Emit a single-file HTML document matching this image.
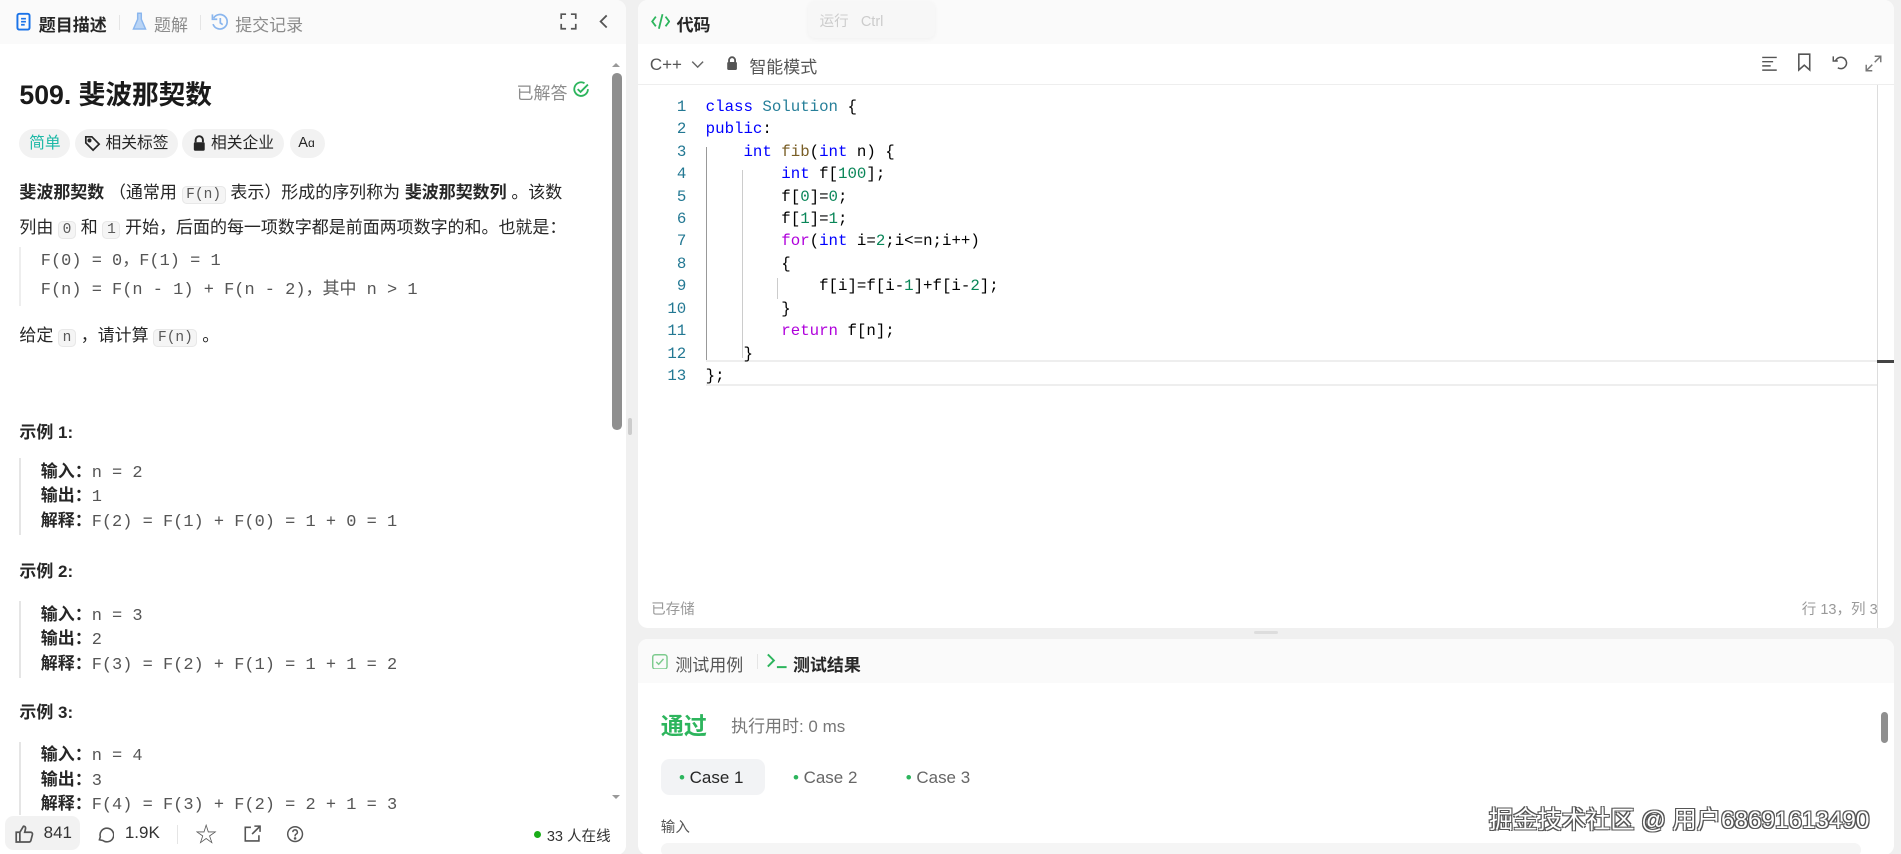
<!DOCTYPE html>
<html><head><meta charset="utf-8"><style>
*{box-sizing:border-box;margin:0;padding:0}
html,body{width:1901px;height:854px;overflow:hidden;background:#f0f0f0}
#z{zoom:1.2125;width:1568px;height:705px;position:relative;font-family:"Liberation Sans","Noto Sans CJK SC",sans-serif;color:#262626;font-size:14px}
.a{position:absolute}
.mono{font-family:"Liberation Mono","DejaVu Sans Mono",monospace}
.lp{left:0;top:0;width:516px;height:705px;background:#fff;border-radius:0 8px 8px 0;overflow:hidden}
.hd{left:0;top:0;width:100%;height:36px;background:#fafafa}
.code{background:#f5f5f5;border:1px solid #e8e8e8;border-radius:4px;font-size:12px;padding:0 3px;color:#595959;font-family:"Liberation Mono",monospace}
.tag{height:24px;border-radius:12px;background:#f2f2f2;font-size:13px;line-height:24px;padding:0 8px;top:106px;white-space:nowrap}
.ex{left:16px;font-weight:bold;font-size:14px}
.blk{left:16px;border-left:2px solid #e5e5e5;padding-left:16px;font-size:14px;line-height:18.5px;color:#555}
.blk b{color:#262626}
.rp{left:526px;top:0;width:1036px;height:518px;background:#fff;border-radius:8px;overflow:hidden}
.ln{left:526px;width:40px;text-align:right;font-size:13px;color:#237893;font-family:"Liberation Mono",monospace}
.cl{left:582px;font-size:13px;font-family:"Liberation Mono",monospace;color:#000;white-space:pre}
.k{color:#0000ff}.t{color:#267f99}.n{color:#098658}.p{color:#af00db}.f{color:#795e26}
.tp{left:526px;top:527px;width:1036px;height:178px;background:#fff;border-radius:8px;overflow:hidden}
</style></head><body><div id="z">
<div class="a lp">
 <div class="a hd"></div>
 <svg class="a" style="left:12px;top:10px" width="14" height="16" viewBox="0 0 14 16"><rect x="2" y="1.5" width="10" height="13" rx="1.5" fill="none" stroke="#1a73e8" stroke-width="1.6"/><path d="M5 5.5h4M5 8h4M5 10.5h3" stroke="#1a73e8" stroke-width="1.4"/></svg>
 <div class="a" style="left:32px;top:9px;font-size:14px;font-weight:bold">题目描述</div>
 <div class="a" style="left:98px;top:12px;width:1px;height:13px;background:#e5e5e5"></div>
 <svg class="a" style="left:108px;top:10px" width="14" height="16" viewBox="0 0 14 16"><path d="M5 1h4M5.5 1v5L2 14h10L8.5 6V1" fill="#b9d4f5" stroke="#8ab6ee" stroke-width="1.2"/></svg>
 <div class="a" style="left:127px;top:9px;color:#8c8c8c">题解</div>
 <div class="a" style="left:165px;top:12px;width:1px;height:13px;background:#e5e5e5"></div>
 <svg class="a" style="left:173px;top:10px" width="16" height="16" viewBox="0 0 16 16"><path d="M3 5A6 6 0 1 1 2.5 10" fill="none" stroke="#8ab6ee" stroke-width="1.4"/><path d="M2 2v4h4" fill="none" stroke="#8ab6ee" stroke-width="1.4"/><path d="M8.5 5v4l2 1.5" fill="none" stroke="#8ab6ee" stroke-width="1.4"/></svg>
 <div class="a" style="left:194px;top:9px;color:#8c8c8c">提交记录</div>
 <svg class="a" style="left:462px;top:11px" width="14" height="14" viewBox="0 0 14 14" fill="none" stroke="#555" stroke-width="1.4"><path d="M1 5V1h4M9 1h4v4M13 9v4H9M5 13H1V9"/></svg>
 <svg class="a" style="left:492px;top:11px" width="12" height="14" viewBox="0 0 12 14" fill="none" stroke="#555" stroke-width="1.5"><path d="M8 2L3 7l5 5"/></svg>
 <div class="a" style="left:16px;top:60px;font-size:22px;font-weight:bold;color:#1a1a1a">509. 斐波那契数</div>
 <div class="a" style="left:426px;top:65px;color:#8c8c8c;font-size:14px">已解答</div>
 <svg class="a" style="left:472px;top:66px" width="15" height="15" viewBox="0 0 16 16" fill="none" stroke="#2db55d" stroke-width="1.6"><path d="M14 8A6 6 0 1 1 11 2.8"/><path d="M5 8l2.5 2.5L14 4"/></svg>
 <div class="a tag" style="left:16px;color:#1cb8a6">简单</div>
 <div class="a tag" style="left:62px;padding-left:25px">相关标签</div>
 <svg class="a" style="left:69px;top:111px" width="14" height="14" viewBox="0 0 14 14" fill="none" stroke="#262626" stroke-width="1.4"><path d="M1.5 1.5h5l6 6-5 5-6-6z"/><circle cx="4.5" cy="4.5" r="1" fill="#262626"/></svg>
 <div class="a tag" style="left:150px;padding-left:24px">相关企业</div>
 <svg class="a" style="left:158px;top:111px" width="12" height="14" viewBox="0 0 12 14"><path d="M3 6V4a3 3 0 0 1 6 0v2" fill="none" stroke="#262626" stroke-width="1.6"/><rect x="1.5" y="6" width="9" height="7" rx="1" fill="#262626"/></svg>
 <div class="a tag" style="left:239px;width:29px;padding:0 7px;font-size:12px">A<span style="font-size:10px">ɑ</span></div>
 <div class="a" style="left:16px;top:146px;width:490px;line-height:26px;font-size:14px;white-space:nowrap"><b>斐波那契数</b> （通常用 <span class="code">F(n)</span> 表示）形成的序列称为 <b>斐波那契数列</b> 。该数<br>列由 <span class="code">0</span> 和 <span class="code">1</span> 开始，后面的每一项数字都是前面两项数字的和。也就是：</div>
 <div class="a mono" style="left:16px;top:204px;border-left:2px solid #eee;padding-left:16px;line-height:24px;color:#555;font-size:14px;white-space:pre">F(0) = 0，F(1) = 1
F(n) = F(n - 1) + F(n - 2)，其中 n &gt; 1</div>
 <div class="a" style="left:16px;top:264px;line-height:26px">给定 <span class="code">n</span> ，请计算 <span class="code">F(n)</span> 。</div>
 <div class="a ex" style="top:345px">示例 1:</div>
 <div class="a blk" style="top:378px;height:63px;padding-top:2px"><b>输入：</b><span class="mono">n = 2</span><br><b>输出：</b><span class="mono">1</span><br><b>解释：</b><span class="mono">F(2) = F(1) + F(0) = 1 + 0 = 1</span></div>
 <div class="a ex" style="top:459px">示例 2:</div>
 <div class="a blk" style="top:496px;height:63px;padding-top:2px"><b>输入：</b><span class="mono">n = 3</span><br><b>输出：</b><span class="mono">2</span><br><b>解释：</b><span class="mono">F(3) = F(2) + F(1) = 1 + 1 = 2</span></div>
 <div class="a ex" style="top:576px">示例 3:</div>
 <div class="a blk" style="top:612px;height:60px;padding-top:2px;overflow:hidden"><b>输入：</b><span class="mono">n = 4</span><br><b>输出：</b><span class="mono">3</span><br><b>解释：</b><span class="mono">F(4) = F(3) + F(2) = 2 + 1 = 3</span></div>
 <div class="a" style="left:505px;top:60px;width:8px;height:295px;background:#8f8f8f;border-radius:4px"></div>
 <div class="a" style="left:505px;top:52px;width:0;height:0;border:4px solid transparent;border-bottom-color:#999;border-top:0"></div>
 <div class="a" style="left:505px;top:656px;width:0;height:0;border:4px solid transparent;border-top-color:#999;border-bottom:0"></div>
 <div class="a" style="left:0;top:672px;width:516px;height:33px;background:#fff"></div>
 <div class="a" style="left:4px;top:673px;width:62px;height:28px;border-radius:7px;background:#f2f2f2"></div>
 <svg class="a" style="left:12px;top:680px" width="16" height="15" viewBox="0 0 16 15" fill="none" stroke="#555" stroke-width="1.4"><path d="M1 6h3v8H1zM4 6l3-5c1.5 0 2 1 1.6 2.5L8 6h5c1 0 1.6.9 1.4 1.8l-1.3 5c-.2.7-.8 1.2-1.5 1.2H4"/></svg>
 <div class="a" style="left:36px;top:679px;font-size:14px;color:#333">841</div>
 <svg class="a" style="left:79px;top:680px" width="15" height="15" viewBox="0 0 16 16" fill="none" stroke="#555" stroke-width="1.4"><path d="M3 13l.8-2.6A6 6 0 1 1 6 13.6z"/></svg>
 <div class="a" style="left:103px;top:679px;color:#333">1.9K</div>
 <div class="a" style="left:146px;top:680px;width:1px;height:16px;background:#e5e5e5"></div>
 <div class="a" style="left:161px;top:675px;font-size:18px;color:#555">☆</div>
 <svg class="a" style="left:200px;top:680px" width="15" height="15" viewBox="0 0 16 16" fill="none" stroke="#555" stroke-width="1.4"><path d="M7 2H2v12h12V9M10 1h5v5M15 1L8 8"/></svg>
 <svg class="a" style="left:236px;top:680px" width="15" height="15" viewBox="0 0 16 16" fill="none" stroke="#555" stroke-width="1.3"><circle cx="8" cy="8" r="6.5"/><path d="M6 6.3a2 2 0 1 1 2.8 1.8c-.5.3-.8.7-.8 1.3v.6"/><circle cx="8" cy="11.8" r=".5" fill="#555"/></svg>
 <div class="a" style="left:440px;top:685px;width:6px;height:6px;border-radius:3px;background:#1aad19"></div>
 <div class="a" style="left:451px;top:680px;font-size:12px;color:#333">33 人在线</div>
</div>
<div class="a" style="left:518px;top:345px;width:3px;height:14px;background:#ccc;border-radius:2px"></div>

<div class="a rp">
 <div class="a" style="left:0;top:0;width:100%;height:36px;background:#fafafa"></div>
 <svg class="a" style="left:11px;top:11px" width="16" height="14" viewBox="0 0 16 14" fill="none" stroke="#2db55d" stroke-width="1.5"><path d="M4 3L1 7l3 4M12 3l3 4-3 4M9.5 1L6.5 13"/></svg>
 <div class="a" style="left:32px;top:9px;font-weight:bold">代码</div>
 <div class="a" style="left:140px;top:1px;width:105px;height:30px;background:#f7f7f7;border-radius:6px;box-shadow:0 1px 4px rgba(0,0,0,.04)"></div>
 <div class="a" style="left:150px;top:8px;font-size:12px;color:#ccc">运行 &nbsp; Ctrl</div>
 <div class="a" style="left:0;top:36px;width:100%;height:34px;border-bottom:1px solid #eee"></div>
 <div class="a" style="left:10px;top:45px;color:#555;font-size:14px">C++</div>
 <svg class="a" style="left:44px;top:48px" width="11" height="10" viewBox="0 0 11 10" fill="none" stroke="#666" stroke-width="1.2"><path d="M1 3l4.5 4.5L10 3"/></svg>
 <svg class="a" style="left:73px;top:46px" width="10" height="12" viewBox="0 0 10 12"><path d="M2.5 5V3.5a2.5 2.5 0 0 1 5 0V5" fill="none" stroke="#555" stroke-width="1.5"/><rect x="1" y="5" width="8" height="6.5" rx="1" fill="#555"/></svg>
 <div class="a" style="left:92px;top:44px;color:#555;font-size:14px">智能模式</div>
 <svg class="a" style="left:926px;top:45px" width="14" height="14" viewBox="0 0 14 14" stroke="#555" stroke-width="1.2"><path d="M1 2h12M1 5.5h9M1 9h7M1 12.5h12"/></svg>
 <svg class="a" style="left:956px;top:44px" width="12" height="15" viewBox="0 0 12 15" fill="none" stroke="#555" stroke-width="1.3"><path d="M1.5 1h9v13L6 10l-4.5 4z"/></svg>
 <svg class="a" style="left:984px;top:44px" width="15" height="15" viewBox="0 0 16 16" fill="none" stroke="#555" stroke-width="1.3"><path d="M4 7A5 5 0 1 1 6 13"/><path d="M2 3v4h4"/></svg>
 <svg class="a" style="left:1012px;top:45px" width="14" height="14" viewBox="0 0 14 14" fill="none" stroke="#777" stroke-width="1.2"><path d="M8 1h5v5M13 1L8 6M1 8v5h5M1 13l5-5"/></svg>
 <div class="a" style="left:1022px;top:70px;width:1px;height:448px;background:#ddd"></div>
 <div class="a" style="left:1022px;top:297px;width:14px;height:2px;background:#444"></div>
 <div class="a" style="left:56px;top:297px;width:966px;height:21px;border-top:2px solid #eee;border-bottom:2px solid #eee"></div>
 <div class="a" style="left:56px;top:121px;width:1px;height:176px;background:#999"></div>
 <div class="a" style="left:86px;top:140px;width:1px;height:155px;background:#ccc"></div>
 <div class="a" style="left:115px;top:229px;width:1px;height:18px;background:#ccc"></div>
 <div class="a" style="left:11px;top:493px;font-size:12px;color:#999">已存储</div>
 <div class="a" style="left:960px;top:493px;font-size:12px;color:#999">行 13，列 3</div>
</div>
<div class="a ln" style="top:79px;line-height:18.5px;white-space:pre">1
2
3
4
5
6
7
8
9
10
11
12
13</div>
<div class="a cl" style="top:79px;line-height:18.5px"><span class="k">class</span> <span class="t">Solution</span> {
<span class="k">public</span>:
    <span class="k">int</span> <span class="f">fib</span>(<span class="k">int</span> n) {
        <span class="k">int</span> f[<span class="n">100</span>];
        f[<span class="n">0</span>]=<span class="n">0</span>;
        f[<span class="n">1</span>]=<span class="n">1</span>;
        <span class="p">for</span>(<span class="k">int</span> i=<span class="n">2</span>;i&lt;=n;i++)
        {
            f[i]=f[i-<span class="n">1</span>]+f[i-<span class="n">2</span>];
        }
        <span class="p">return</span> f[n];
    }
};</div>
<div class="a" style="left:1034px;top:520px;width:20px;height:3px;background:#ddd;border-radius:2px"></div>

<div class="a tp">
 <div class="a" style="left:0;top:0;width:100%;height:36px;background:#fafafa"></div>
 <svg class="a" style="left:12px;top:12px" width="13" height="13" viewBox="0 0 13 13" fill="none" stroke="#7dcb8e" stroke-width="1.2"><rect x=".6" y=".6" width="11.8" height="11.8" rx="2"/><path d="M3.5 6.5l2 2 4-4.5"/></svg>
 <div class="a" style="left:31px;top:10px;color:#555">测试用例</div>
 <div class="a" style="left:98px;top:12px;width:1px;height:13px;background:#e5e5e5"></div>
 <svg class="a" style="left:106px;top:11px" width="18" height="14" viewBox="0 0 18 14" fill="none" stroke="#2db55d" stroke-width="1.6"><path d="M1.5 2l5 5-5 5M9 12.5h8"/></svg>
 <div class="a" style="left:128px;top:10px;font-weight:bold">测试结果</div>
 <div class="a" style="left:19px;top:56px;font-size:19px;font-weight:bold;color:#2db55d">通过</div>
 <div class="a" style="left:77px;top:60px;font-size:14px;color:#777">执行用时: 0 ms</div>
 <div class="a" style="left:19px;top:99px;width:86px;height:30px;background:#f2f3f5;border-radius:7px"></div>
 <div class="a" style="left:34px;top:106px;font-size:14px"><span style="color:#2db55d">•</span> Case 1</div>
 <div class="a" style="left:128px;top:106px;font-size:14px;color:#666"><span style="color:#2db55d">•</span> Case 2</div>
 <div class="a" style="left:221px;top:106px;font-size:14px;color:#666"><span style="color:#2db55d">•</span> Case 3</div>
 <div class="a" style="left:19px;top:146px;font-size:12px;color:#555">输入</div>
 <div class="a" style="left:19px;top:168px;width:990px;height:12px;background:#f5f5f5;border-radius:6px"></div>
 <div class="a" style="left:1025px;top:60px;width:6px;height:26px;background:#8f8f8f;border-radius:3px"></div>
 <div class="a" style="left:702px;top:133px;font-size:20px;color:#fff;text-shadow:1px 1px 0 #555,-1px -1px 0 #555,1px -1px 0 #555,-1px 1px 0 #555">掘金技术社区 @ 用户68691613490</div>
</div>
</div></body></html>
